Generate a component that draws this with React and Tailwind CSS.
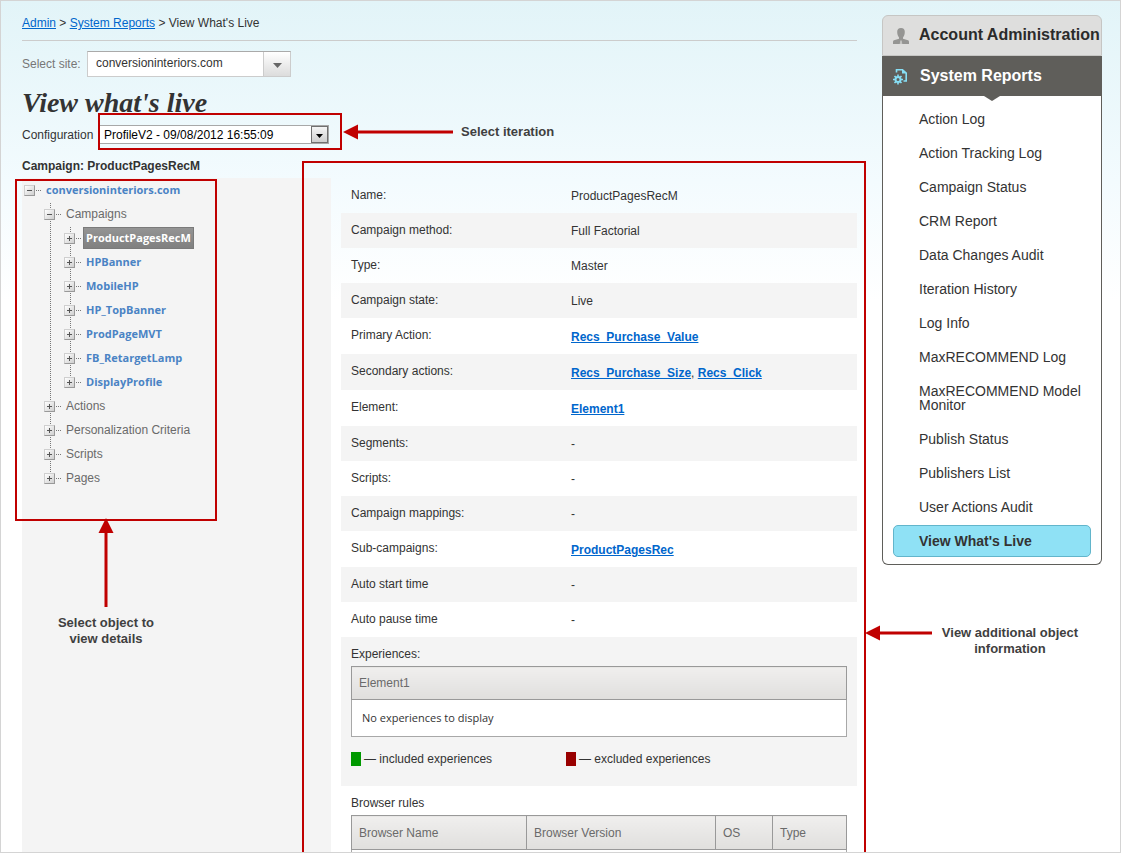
import { clsx } from 'clsx';

const CAMPAIGNS = ['ProductPagesRecM', 'HPBanner', 'MobileHP', 'HP_TopBanner', 'ProdPageMVT', 'FB_RetargetLamp', 'DisplayProfile'];

const SECTIONS = ['Actions', 'Personalization Criteria', 'Scripts', 'Pages'];

const DETAILS = [
    { label: 'Name:', value: 'ProductPagesRecM' },
    { label: 'Campaign method:', value: 'Full Factorial' },
    { label: 'Type:', value: 'Master' },
    { label: 'Campaign state:', value: 'Live' },
    { label: 'Primary Action:', links: ['Recs_Purchase_Value'] },
    { label: 'Secondary actions:', links: ['Recs_Purchase_Size', 'Recs_Click'] },
    { label: 'Element:', links: ['Element1'] },
    { label: 'Segments:', value: '-' },
    { label: 'Scripts:', value: '-' },
    { label: 'Campaign mappings:', value: '-' },
    { label: 'Sub-campaigns:', links: ['ProductPagesRec'] },
    { label: 'Auto start time', value: '-' },
    { label: 'Auto pause time', value: '-' },
];

const REPORTS = [
    'Action Log',
    'Action Tracking Log',
    'Campaign Status',
    'CRM Report',
    'Data Changes Audit',
    'Iteration History',
    'Log Info',
    'MaxRECOMMEND Log',
    'MaxRECOMMEND Model Monitor',
    'Publish Status',
    'Publishers List',
    'User Actions Audit',
];

function Toggle({ open, name }) {
    return (
        <>
            <button
                aria-label={`${open ? 'Collapse' : 'Expand'} ${name}`}
                className="relative ml-0.5 h-[11px] w-[11px] shrink-0 border border-t-[#cfcfcf] border-l-[#cfcfcf] border-r-[#999] border-b-[#999] bg-linear-to-br from-white to-[#cfcfcf]"
            >
                <svg viewBox="0 0 9 9" className="block h-[9px] w-[9px]" fill="#555" shapeRendering="crispEdges">
                    <path d="M2 4h5v1H2z" />
                    {!open && <path d="M4 2h1v5H4z" />}
                </svg>
            </button>
            <span className="ml-px w-[5px] shrink-0 border-t border-dotted border-[#777]" />
        </>
    );
}

function Branch({ children }) {
    return (
        <ul className="relative pl-5">
            <span className="absolute top-px bottom-3 left-7 border-l border-dotted border-[#777]" />
            {children}
        </ul>
    );
}

function Tree() {
    return (
        <ul className="text-xs">
            <li>
                <div className="flex h-6 items-center">
                    <Toggle open name="conversioninteriors.com" />
                    <a href="#site" className="ml-[5px] font-['Open_Sans',sans-serif] text-[11px] font-bold text-[#4a83c4]">conversioninteriors.com</a>
                </div>
                <Branch>
                    <li>
                        <div className="flex h-6 items-center">
                            <Toggle open name="Campaigns" />
                            <a href="#campaigns" className="ml-[5px] text-[#6a6a6a]">Campaigns</a>
                        </div>
                        <Branch>
                            {CAMPAIGNS.map((name, i) => (
                                <li key={name} className="flex h-6 items-center">
                                    <Toggle name={name} />
                                    <a
                                        href={`#${name}`}
                                        className={clsx(
                                            "ml-0.5 border px-0.5 font-['Open_Sans',sans-serif] text-[11px] font-bold leading-5",
                                            i === 0 ? 'border-[#7a7a7a] bg-linear-to-b from-[#949494] to-[#808080] text-white' : 'border-transparent text-[#4a83c4]'
                                        )}
                                    >
                                        {name}
                                    </a>
                                </li>
                            ))}
                        </Branch>
                    </li>
                    {SECTIONS.map(name => (
                        <li key={name} className="flex h-6 items-center">
                            <Toggle name={name} />
                            <a href={`#${name}`} className="ml-[5px] whitespace-nowrap text-[#6a6a6a]">{name}</a>
                        </li>
                    ))}
                </Branch>
            </li>
        </ul>
    );
}

function DetailRow({ row, shaded }) {
    return (
        <div className={clsx('flex px-2.5 pt-2', row.links ? 'h-9' : 'h-[35px]', shaded && 'bg-[#f4f4f4]')}>
            <dt className="w-[220px] shrink-0 leading-[18px]">{row.label}</dt>
            <dd className={row.links ? 'leading-[22px]' : 'leading-5'}>
                {row.links
                    ? row.links.map((link, i) => (
                        <span key={link}>
                            {i > 0 && ', '}
                            <a href={`#${link}`} className="font-bold text-[#06c] underline">{link}</a>
                        </span>
                    ))
                    : row.value}
            </dd>
        </div>
    );
}

function HeadCell({ children, className }) {
    return (
        <th scope="col" className={clsx('border border-[#999] bg-linear-to-b from-[#f0efee] to-[#e0dfdd] px-[7px] text-left font-normal text-[#6a6a6a]', className)}>
            {children}
        </th>
    );
}

function Details() {
    return (
        <section className="relative min-w-0 flex-1">
            <dl>
                {DETAILS.map((row, i) => <DetailRow key={row.label} row={row} shaded={i % 2 === 1} />)}
            </dl>

            <div className="h-[149px] bg-[#f4f4f4] px-2.5 pt-2">
                <h3 className="mb-[3px] leading-[18px]">Experiences:</h3>
                <table className="w-full border-collapse bg-white">
                    <thead>
                        <tr><HeadCell className="h-[33px]">Element1</HeadCell></tr>
                    </thead>
                    <tbody>
                        <tr>
                            <td className="h-[37px] border border-[#a8a8a8] px-2.5 font-['Open_Sans',sans-serif] text-[11px]">No experiences to display</td>
                        </tr>
                    </tbody>
                </table>
                <div className="mt-3 flex leading-5">
                    <p className="flex w-[215px] items-center gap-[3px]">
                        <span className="h-3.5 w-2.5 bg-[#090]" />— included experiences
                    </p>
                    <p className="flex items-center gap-[3px]">
                        <span className="h-3.5 w-2.5 bg-[#900]" />— excluded experiences
                    </p>
                </div>
            </div>

            <div className="px-2.5 pt-2">
                <h3 className="mb-[3px] leading-[18px]">Browser rules</h3>
                <table className="w-full table-fixed border-collapse bg-white">
                    <thead>
                        <tr>
                            <HeadCell className="h-[34px] w-[175px]">Browser Name</HeadCell>
                            <HeadCell>Browser Version</HeadCell>
                            <HeadCell className="w-[57px]">OS</HeadCell>
                            <HeadCell className="w-[74px]">Type</HeadCell>
                        </tr>
                    </thead>
                    <tbody>
                        <tr><td colSpan={4} className="h-9 border border-[#a8a8a8]" /></tr>
                    </tbody>
                </table>
            </div>

            <div className="pointer-events-none absolute -top-[17px] -right-[9px] -bottom-10 -left-[39px] border-2 border-[#c00000]" />
        </section>
    );
}

function ReportsNav() {
    return (
        <nav className="mt-3.5 text-sm">
            <a href="#account" className="flex h-[41px] items-center rounded-t-md border border-[#c6c6c4] bg-[#dededd] pb-0.5 pl-2.5 text-base font-bold whitespace-nowrap text-[#2b2b2b]">
                <svg viewBox="0 0 16 16" className="mt-0.5 mr-2.5 h-4 w-4 shrink-0" fill="#959593">
                    <path d="M8 0c2.600 0 3.800 1.500 3.800 3.800 0 2.200-.6 4.400-1.800 5.600v1.400l5 1.500c.7.300 1 .8 1 1.600V16H0v-2.100c0-.8.300-1.300 1-1.600l5-1.500V9.400C4.800 8.200 4.200 6 4.200 3.800 4.200 1.500 5.400 0 8 0z" />
                    <path fill="#c4c4c2" d="M7.300 12.500h1.400l.6 3.500H6.700z" />
                </svg>
                Account Administration
            </a>
            <div className="relative flex h-10 items-center bg-[#5f5e5a] pl-[11px] text-base font-bold text-white">
                <svg viewBox="0 0 16 17" className="mr-[11px] h-[17px] w-4 shrink-0">
                    <path d="M3.500 4.500V1.800H9.500L13.200 5v8H10.500" fill="none" stroke="#87dff5" strokeWidth="1.600" />
                    <path d="M9 1v4.500h5z" fill="#87dff5" />
                    <circle cx="5" cy="11.500" r="2.500" fill="none" stroke="#87dff5" strokeWidth="2" />
                    <path d="M5 6.500v2M5 14.500v2M0 11.500h2M8 11.500h2M1.500 8l1.400 1.400M7.100 13.600 8.500 15M8.500 8 7.100 9.400M2.900 13.600 1.500 15" stroke="#87dff5" strokeWidth="1.600" />
                </svg>
                System Reports
                <svg viewBox="0 0 16 5" className="absolute top-full left-1/2 h-[5px] w-4 -translate-x-1/2" fill="#5f5e5a">
                    <path d="M0 0h16L8 5z" />
                </svg>
            </div>
            <ul className="rounded-b-md border border-t-0 border-[#5f5e5a] bg-white px-2.5 pt-1.5 pb-[7px] leading-[14px] text-[#333]">
                {REPORTS.map(name => (
                    <li key={name}>
                        <a href={`#${name}`} className="block py-2.5 pr-1 pl-[26px]">{name}</a>
                    </li>
                ))}
                <li>
                    <a href="#live" className="mt-px block rounded-[5px] border border-[#62b5cb] bg-[#8fe1f5] py-2 pl-[25px] font-bold">View What's Live</a>
                </li>
            </ul>
        </nav>
    );
}

function LeftArrow({ className }) {
    return (
        <svg viewBox="0 0 110 16" preserveAspectRatio="xMinYMid slice" className={clsx('h-4 shrink-0', className)} fill="#c00000">
            <path d="M0 8 15 .5v15z" />
            <path d="M14 6.500h96v3H14z" />
        </svg>
    );
}

export default function App() {
    return (
        <div className="flex h-screen gap-[25px] overflow-hidden border border-[#d4d4d4] bg-[linear-gradient(to_bottom,#e2f4f8,#f3fbfe_180px,#ffffff_300px)] pr-[18px] pl-[21px] font-['Liberation_Sans',Arial,sans-serif] text-xs text-[#333]">
            <main className="flex min-w-0 flex-1 flex-col">
                <nav className="border-b border-[#ccc] pt-3 pb-[7px] leading-5">
                    <a href="#admin" className="text-[#06c] underline">Admin</a> &gt; <a href="#reports" className="text-[#06c] underline">System Reports</a> &gt; View What's Live
                </nav>

                <div className="mt-2.5 flex h-[26px] items-center">
                    <label htmlFor="site" className="w-[65px] shrink-0 text-[#777]">Select site:</label>
                    <div className="relative h-full w-[204px]">
                        <select id="site" className="h-full w-full appearance-none border border-[#ccc] border-t-[#aaa] bg-white pr-8 pb-0.5 pl-2">
                            <option>conversioninteriors.com</option>
                        </select>
                        <span className="pointer-events-none absolute inset-y-px right-px flex w-[27px] items-center justify-center border-l border-[#ccc] bg-linear-to-b from-white to-[#dcdcdc]">
                            <svg viewBox="0 0 9 5" className="mt-0.5 h-[5px] w-[9px]" fill="#666"><path d="M0 0h9L4.500 5z" /></svg>
                        </span>
                    </div>
                </div>

                <h1 className="mt-3 font-['Liberation_Serif',Georgia,serif] text-[28px] leading-7 font-bold italic">View what's live</h1>

                <div className="-mt-1 flex h-[37px] items-center">
                    <label htmlFor="configuration" className="w-[76px] shrink-0 self-start pt-3 leading-5">Configuration</label>
                    <div className="h-full w-[244px] shrink-0 border-2 border-[#c00000] pt-2.5">
                        <div className="relative h-[19px] w-[229px]">
                            <select id="configuration" className="block h-full w-full appearance-none border-y border-r border-[#a8a8a8] bg-white pr-5 pl-1 text-black">
                                <option>ProfileV2 - 09/08/2012 16:55:09</option>
                            </select>
                            <span className="pointer-events-none absolute top-px right-px flex h-[17px] w-[17px] items-center justify-center border border-[#707070] bg-linear-to-b from-[#f4f4f4] to-[#cfcfcf]">
                                <svg viewBox="0 0 7 4" className="mt-0.5 h-1 w-[7px]"><path d="M0 0h7L3.500 4z" /></svg>
                            </span>
                        </div>
                    </div>
                    <LeftArrow className="ml-px w-[110px]" />
                    <p className="ml-2 text-[13px] font-bold text-[#404040]">Select iteration</p>
                </div>

                <h2 className="mt-2 mb-1 leading-4 font-bold">Campaign: ProductPagesRecM</h2>

                <div className="flex min-h-0 flex-1 gap-2.5">
                    <aside className="w-[309px] shrink-0 bg-[#f4f4f4]">
                        <div className="relative h-[343px]">
                            <Tree />
                            <div className="pointer-events-none absolute top-px bottom-0 -left-[7px] w-[202px] border-2 border-[#c00000]" />
                        </div>
                        <div className="relative -mt-[3px] flex w-[168px] flex-col items-center">
                            <svg viewBox="0 0 16 89" className="h-[89px] w-4" fill="#c00000">
                                <path d="M8 0 15.500 15H.5z" />
                                <path d="M6.500 14h3v75h-3z" />
                            </svg>
                            <p className="mt-2 w-[120px] text-center text-[13px] leading-4 font-bold text-[#404040]">Select object to view details</p>
                        </div>
                    </aside>
                    <Details />
                </div>
            </main>

            <div className="w-[220px] shrink-0">
                <ReportsNav />
                <div className="relative mt-[60px] -ml-[17px] flex items-start">
                    <LeftArrow className="w-[67px]" />
                    <p className="ml-1 w-[148px] text-center text-[13px] leading-4 font-bold text-[#404040]">View additional object information</p>
                </div>
            </div>
        </div>
    );
}
